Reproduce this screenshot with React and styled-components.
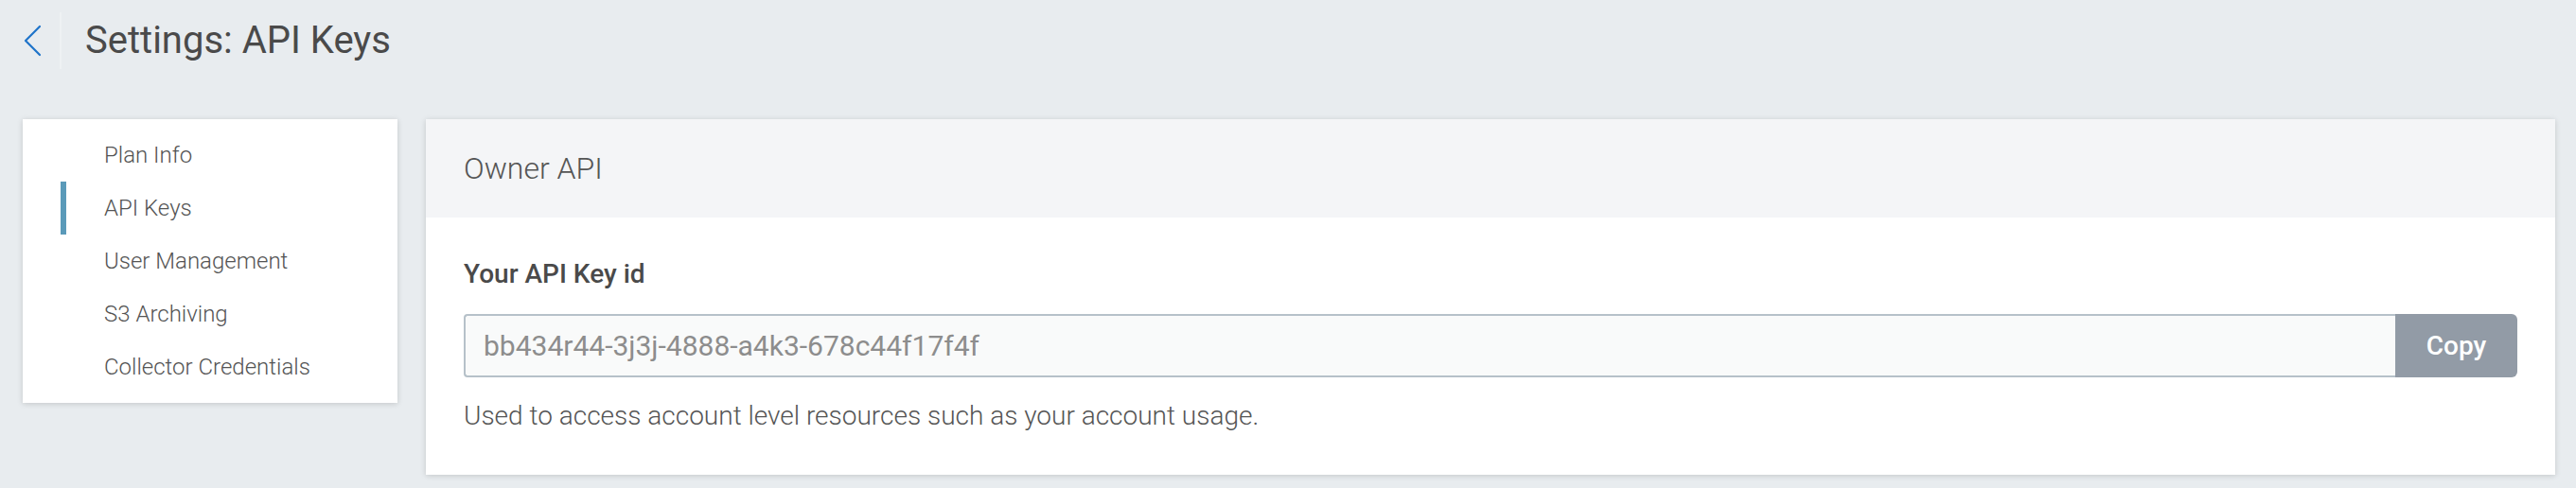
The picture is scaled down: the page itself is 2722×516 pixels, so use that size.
import React from "react";
import styled, { createGlobalStyle } from "styled-components";

const GlobalStyle = createGlobalStyle`
  html, body {
    margin: 0;
    padding: 0;
    background-color: #e8ecef;
    font-family: Roboto, "Liberation Sans", sans-serif;
  }
`;

const menuItems = [
  { id: 1, title: "Plan Info" },
  { id: 2, title: "API Keys" },
  { id: 3, title: "User Management" },
  { id: 4, title: "S3 Archiving" },
  { id: 5, title: "Collector Credentials" },
];

const BackIcon = () => (
  <svg width="20" height="34" viewBox="0 0 20 34" fill="none">
    <polyline
      points="17,2 2,17 17,32"
      stroke="#1f74c9"
      strokeWidth="2.2"
      strokeLinecap="round"
      strokeLinejoin="round"
    />
  </svg>
);

const App = () => {
  const activeItem = 2;

  return (
    <Page>
      <GlobalStyle />
      <TopBar>
        <BackButton>
          <BackIcon />
        </BackButton>
        <TopDivider />
        <Title>Settings: API Keys</Title>
      </TopBar>

      <Content>
        <SideMenu>
          {menuItems.map((item) => (
            <MenuItem key={item.id} active={item.id === activeItem}>
              {item.title}
            </MenuItem>
          ))}
        </SideMenu>

        <Card>
          <CardHeader>Owner API</CardHeader>
          <CardBody>
            <FieldLabel>Your API Key id</FieldLabel>
            <KeyRow>
              <KeyInput readOnly value="bb434r44-3j3j-4888-a4k3-678c44f17f4f" />
              <CopyButton>Copy</CopyButton>
            </KeyRow>
            <HelpText>
              Used to access account level resources such as your account usage.
            </HelpText>
          </CardBody>
        </Card>
      </Content>
    </Page>
  );
};

export default App;

const Page = styled.div`
  width: 2722px;
  height: 516px;
  background-color: #e8ecef;
`;

const TopBar = styled.div`
  display: flex;
  align-items: center;
  height: 86px;
  padding-left: 25px;
`;

const BackButton = styled.div`
  display: flex;
  align-items: center;
  width: 38px;
`;

const TopDivider = styled.div`
  width: 2px;
  height: 60px;
  background-color: #eef1f3;
`;

const Title = styled.h1`
  margin: 0 0 0 25px;
  font-size: 40px;
  font-weight: 400;
  line-height: 48px;
  color: #4a4a4a;
`;

const Content = styled.div`
  display: flex;
  align-items: flex-start;
  gap: 30px;
  padding: 40px 22px 0 24px;
`;

const SideMenu = styled.div`
  flex: 0 0 396px;
  padding: 10px 0;
  background-color: #fff;
  box-shadow: 0 1px 6px rgba(0, 0, 0, 0.16);
`;

const MenuItem = styled.div`
  display: flex;
  align-items: center;
  height: 56px;
  margin-left: 40px;
  padding-left: 40px;
  border-left: 6px solid ${(p) => (p.active ? "#5a9ab9" : "transparent")};
  font-size: 24px;
  font-weight: 300;
  color: #545454;
`;

const Card = styled.div`
  flex: 1;
  background-color: #fff;
  box-shadow: 0 1px 6px rgba(0, 0, 0, 0.16);
`;

const CardHeader = styled.div`
  display: flex;
  align-items: center;
  height: 104px;
  padding-left: 40px;
  background-color: #f4f5f7;
  font-size: 32px;
  font-weight: 300;
  color: #555;
`;

const CardBody = styled.div`
  padding: 44px 40px 46px;
`;

const FieldLabel = styled.div`
  font-size: 28px;
  font-weight: 500;
  line-height: 32px;
  color: #4a4a4a;
`;

const KeyRow = styled.div`
  display: flex;
  height: 67px;
  margin-top: 26px;
`;

const KeyInput = styled.input`
  flex: 1;
  min-width: 0;
  box-sizing: border-box;
  height: 67px;
  padding: 0 0 0 19px;
  border: 2px solid #b6c1c9;
  border-right: none;
  border-radius: 4px 0 0 4px;
  background-color: #f9fafa;
  font-family: Roboto, "Liberation Sans", sans-serif;
  font-size: 30px;
  font-weight: 400;
  color: #8d8d8d;
  outline: none;
`;

const CopyButton = styled.button`
  flex: 0 0 129px;
  height: 67px;
  border: none;
  border-radius: 0 6px 6px 0;
  background-color: #929ba6;
  font-family: Roboto, "Liberation Sans", sans-serif;
  font-size: 28px;
  font-weight: 500;
  color: #fff;
`;

const HelpText = styled.div`
  margin-top: 25px;
  font-size: 28px;
  font-weight: 300;
  line-height: 32px;
  color: #555;
`;
